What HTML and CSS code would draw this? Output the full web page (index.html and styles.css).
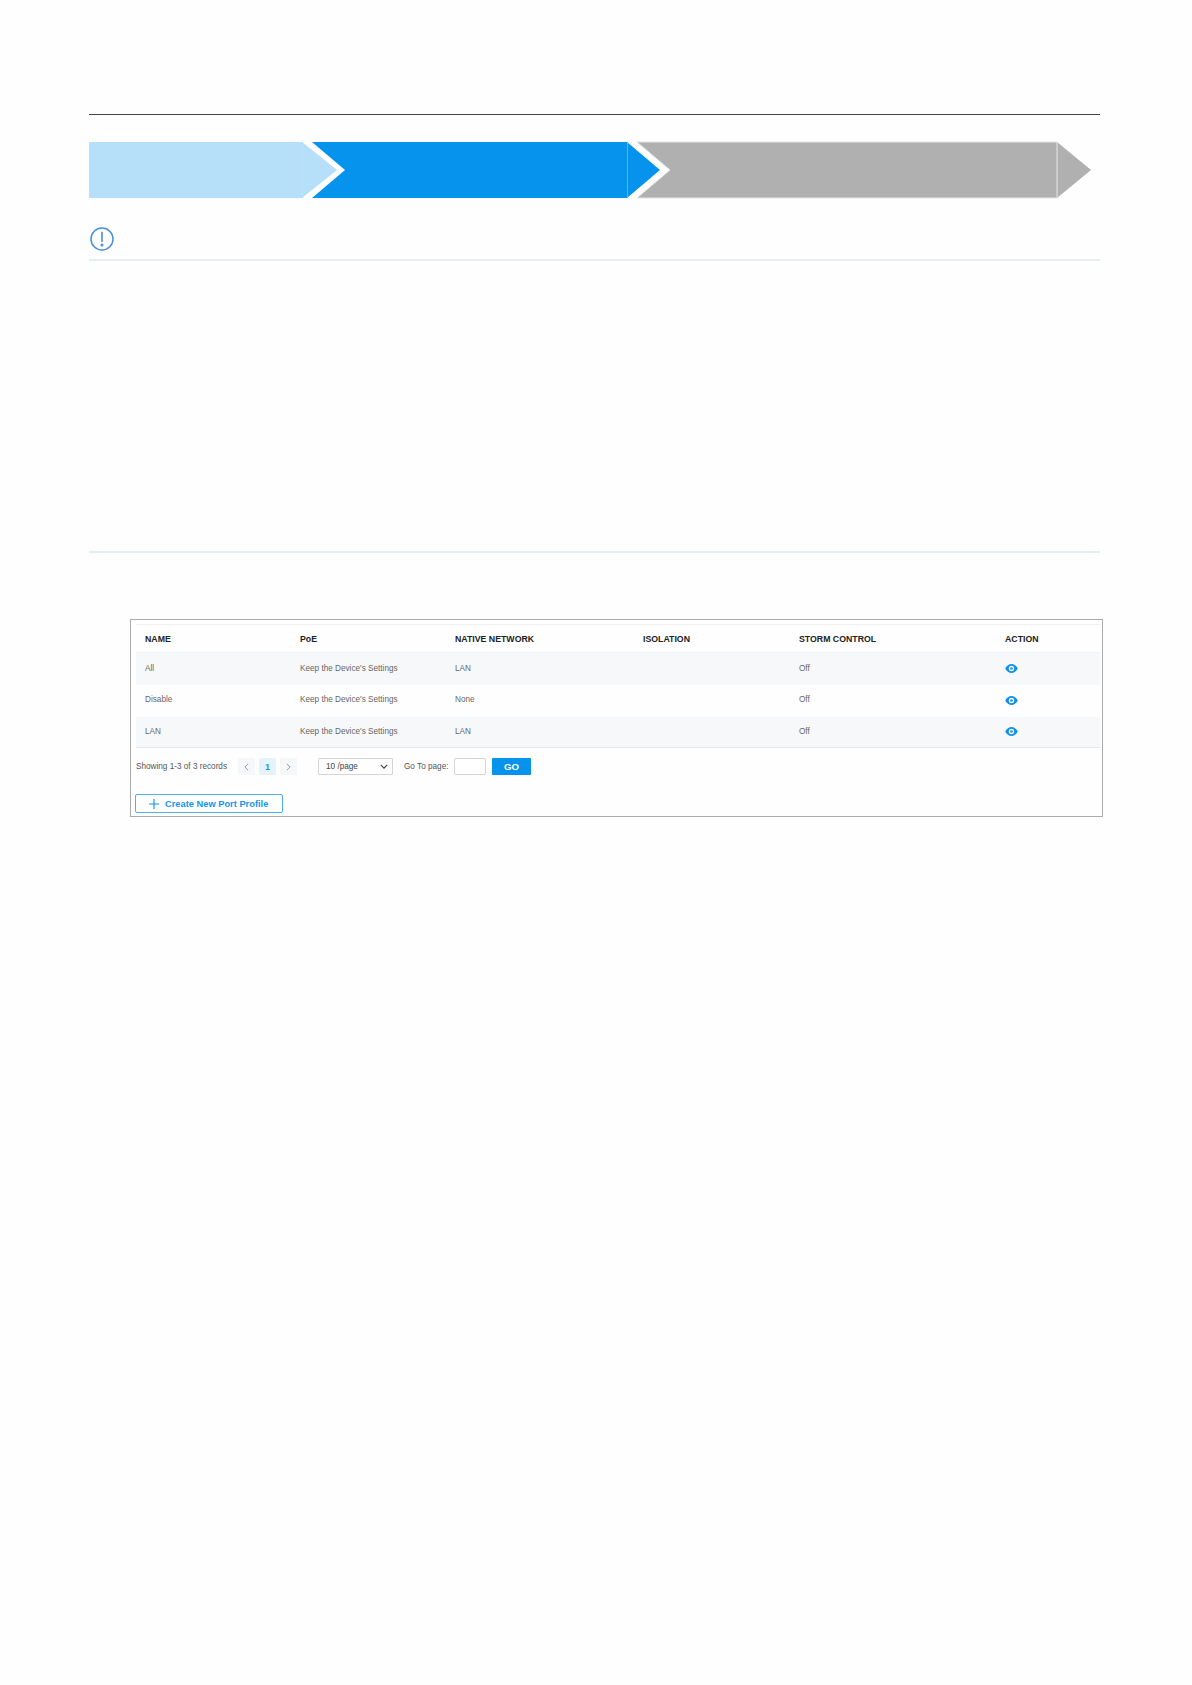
FILE: index.html
```html
<!DOCTYPE html>
<html lang="en">
<head>
<meta charset="utf-8">
<title>Port Profiles</title>
<link rel="stylesheet" href="styles.css">
</head>
<body>
<main class="page">
  <div class="top-rule"></div>
  <svg class="steps" viewBox="0 0 1011 58" width="1011" height="58" aria-hidden="true">
    <polygon points="0,1 213,1 248,29 213,57 0,57" fill="#b6dffa"/>
    <line x1="213.500" y1="1" x2="213.500" y2="57" stroke="#bce2fb" stroke-width="1"/>
    <polygon points="223,1 538,1 571,29 538,57 223,57 256,29" fill="#0693ee"/>
    <line x1="538.500" y1="1" x2="538.500" y2="57" stroke="#5cb6f3" stroke-width="1"/>
    <polygon points="548,1 968,1 968,57 548,57 581,29" fill="#b0b0b0" stroke="#e4e4e4" stroke-width="1"/>
    <polygon points="968,1 1002,29 968,57" fill="#b0b0b0"/>
    <line x1="968.500" y1="1" x2="968.500" y2="57" stroke="#cfcfcf" stroke-width="1"/>
  </svg>
  <section class="notice">
    <svg class="notice-icon" viewBox="0 0 24 24" width="24" height="24" aria-hidden="true">
      <circle cx="12" cy="12" r="11" fill="none" stroke="#4a8fd8" stroke-width="1.500"/>
      <path d="M12 5.500v9" stroke="#4a8fd8" stroke-width="1.600" stroke-linecap="round"/>
      <circle cx="12" cy="18" r="1.500" fill="#4a8fd8"/>
    </svg>
  </section>
  <div class="blank-section"></div>
  <figure class="shot">
    <table class="profiles">
      <colgroup>
        <col class="c1"><col class="c2"><col class="c3"><col class="c4"><col class="c5"><col class="c6">
      </colgroup>
      <thead>
        <tr><th>NAME</th><th>PoE</th><th>NATIVE NETWORK</th><th>ISOLATION</th><th>STORM CONTROL</th><th>ACTION</th></tr>
      </thead>
      <tbody>
        <tr>
          <td>All</td><td>Keep the Device's Settings</td><td>LAN</td><td></td><td>Off</td>
          <td><svg class="eye" viewBox="0 0 14 10" width="13" height="9" aria-hidden="true"><path fill-rule="evenodd" d="M0 5C1.800 1.800 4.200 0 7 0s5.200 1.800 7 5c-1.800 3.200-4.200 5-7 5S1.800 8.200 0 5Zm7 3a3 3 0 1 0 0-6 3 3 0 0 0 0 6Zm0-1.500a1.500 1.500 0 1 1 0-3 1.500 1.500 0 0 1 0 3Z"/></svg></td>
        </tr>
        <tr>
          <td>Disable</td><td>Keep the Device's Settings</td><td>None</td><td></td><td>Off</td>
          <td><svg class="eye" viewBox="0 0 14 10" width="13" height="9" aria-hidden="true"><path fill-rule="evenodd" d="M0 5C1.800 1.800 4.200 0 7 0s5.200 1.800 7 5c-1.800 3.200-4.200 5-7 5S1.800 8.200 0 5Zm7 3a3 3 0 1 0 0-6 3 3 0 0 0 0 6Zm0-1.500a1.500 1.500 0 1 1 0-3 1.500 1.500 0 0 1 0 3Z"/></svg></td>
        </tr>
        <tr>
          <td>LAN</td><td>Keep the Device's Settings</td><td>LAN</td><td></td><td>Off</td>
          <td><svg class="eye" viewBox="0 0 14 10" width="13" height="9" aria-hidden="true"><path fill-rule="evenodd" d="M0 5C1.800 1.800 4.200 0 7 0s5.200 1.800 7 5c-1.800 3.200-4.200 5-7 5S1.800 8.200 0 5Zm7 3a3 3 0 1 0 0-6 3 3 0 0 0 0 6Zm0-1.500a1.500 1.500 0 1 1 0-3 1.500 1.500 0 0 1 0 3Z"/></svg></td>
        </tr>
      </tbody>
    </table>
    <div class="pager">
      <span class="records">Showing 1-3 of 3 records</span>
      <span class="page-btn"><svg viewBox="0 0 6 10" width="5" height="8" aria-hidden="true"><path d="M5 1 1 5l4 4" fill="none" stroke="#8a9096" stroke-width="1.100"/></svg></span>
      <span class="page-btn current">1</span>
      <span class="page-btn"><svg viewBox="0 0 6 10" width="5" height="8" aria-hidden="true"><path d="m1 1 4 4-4 4" fill="none" stroke="#8a9096" stroke-width="1.100"/></svg></span>
      <span class="size-select">10 /page<svg viewBox="0 0 10 6" width="8" height="5" aria-hidden="true"><path d="m1 1 4 4 4-4" fill="none" stroke="#444" stroke-width="1.500"/></svg></span>
      <span class="goto-label">Go To page:</span>
      <span class="goto-input"></span>
      <span class="go-btn">GO</span>
    </div>
    <div class="create-btn">
      <svg viewBox="0 0 10 10" width="10" height="10" aria-hidden="true"><path d="M5 0v10M0 5h10" stroke="#1596ee" stroke-width="1.200"/></svg>
      <span>Create New Port Profile</span>
    </div>
  </figure>
</main>
</body>
</html>
```
FILE: styles.css
```css
* { box-sizing: border-box; }
html, body { margin: 0; padding: 0; background: #fefefe; }
body { font-family: "Liberation Sans", Arial, sans-serif; font-size: 8.200px; color: #555; }
.page { width: 1011px; margin-left: 89px; padding-top: 114px; height: 1685px; }
.top-rule { height: 1px; background: #444; }
.steps { display: block; margin-top: 26px; }
.notice { height: 62px; padding: 28px 0 0 1px; border-bottom: 2px solid #e4eef4; }
.notice-icon { display: block; }
.blank-section { height: 292px; border-bottom: 2px solid #e2eff0; }
.shot { width: 973px; height: 198px; margin: 66px 0 0 41px; padding: 4px 1px 0 5px; border: 1px solid #aaa; }
.profiles { width: 964px; border-collapse: collapse; table-layout: fixed; }
.c1 { width: 155px; } .c2 { width: 155px; } .c3 { width: 188px; }
.c4 { width: 156px; } .c5 { width: 206px; } .c6 { width: 104px; }
.profiles th { height: 28px; padding: 0 0 0 9px; text-align: left; font-size: 8.750px; font-weight: 700; color: #222; border-top: 1px solid #eef0f1; border-bottom: 1px solid #f0f2f4; }
.profiles td { height: 32px; padding: 0 0 1px 9px; color: #666; line-height: 10px; }
.profiles tbody tr:first-child td { padding-bottom: 0; }
.profiles tbody tr:nth-child(odd) td { background: #f7f8fa; }
.profiles tbody tr:last-child td { height: 31px; padding-bottom: 0; border-bottom: 1px solid #e3e5e7; }
.eye { display: block; fill: #0f90e8; }
.pager { display: flex; align-items: center; height: 17px; margin-top: 10px; color: #555; }
.records { width: 102px; }
.page-btn { display: flex; align-items: center; justify-content: center; width: 17px; height: 17px; margin-right: 4px; background: #f5f7f9; border-radius: 1px; }
.page-btn.current { background: #e6f3fd; color: #1596ee; font-size: 9px; font-weight: 700; }
.size-select { display: flex; align-items: center; justify-content: space-between; width: 75px; height: 17px; margin-left: 17px; padding: 0 4px 0 7px; border: 1px solid #d4d4d4; border-radius: 1px; color: #444; }
.goto-label { margin-left: 11px; width: 50px; }
.goto-input { width: 32px; height: 17px; border: 1px solid #d4d4d4; border-radius: 2px; background: #fff; }
.go-btn { display: flex; align-items: center; justify-content: center; width: 39px; height: 17px; margin-left: 6px; background: #0693ee; border-radius: 1px; color: #fff; font-size: 9.700px; font-weight: 700; }
.create-btn { display: flex; align-items: center; gap: 6px; width: 148px; height: 19px; margin: 19px 0 0 -1px; padding-left: 13px; border: 1px solid #4fb0f0; border-radius: 2px; color: #1596ee; font-size: 9.300px; font-weight: 700; }
```
